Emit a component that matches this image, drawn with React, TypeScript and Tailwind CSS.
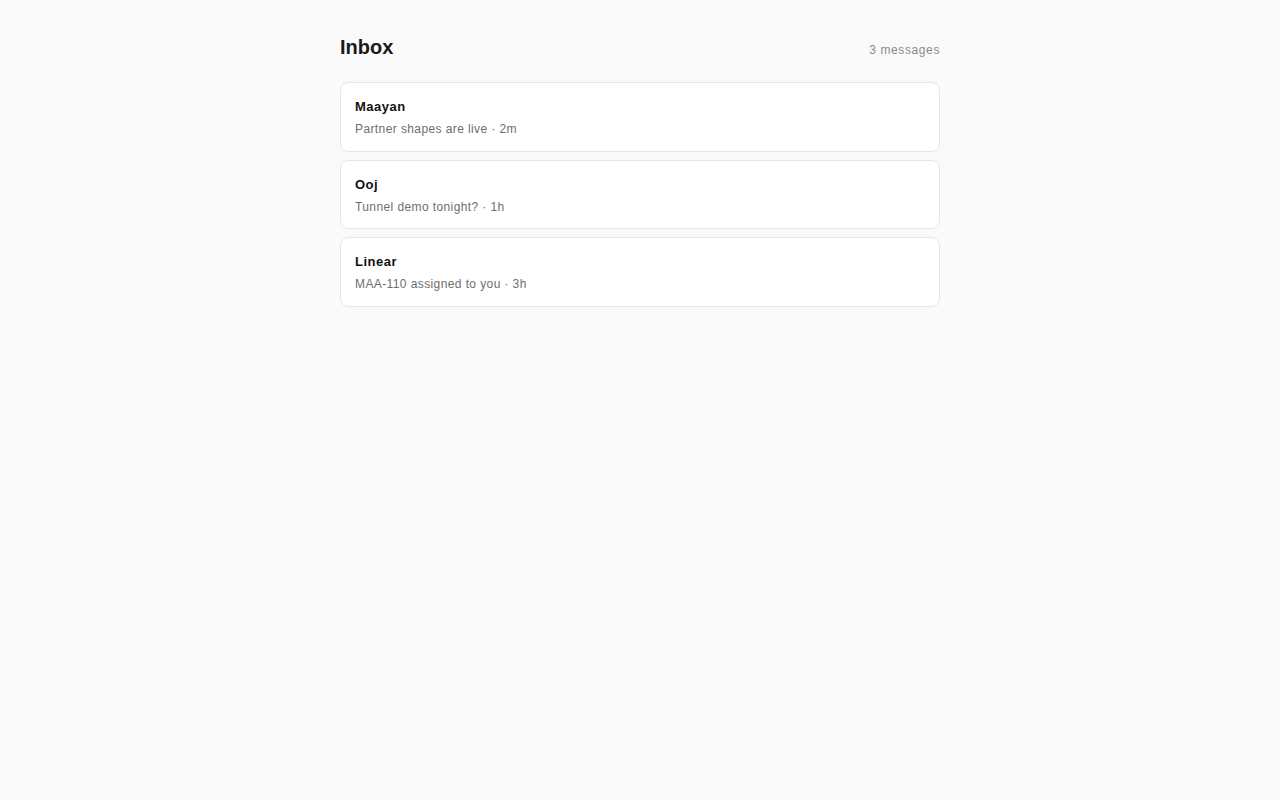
import React from 'react';

type Message = {
    from: string;
    preview: string;
    time: string;
};

const messages: Message[] = [
    { from: 'Maayan', preview: 'Partner shapes are live', time: '2m' },
    { from: 'Ooj', preview: 'Tunnel demo tonight?', time: '1h' },
    { from: 'Linear', preview: 'MAA-110 assigned to you', time: '3h' },
];

export default function App() {
    return (
        <div className="min-h-screen w-full bg-[#fafafa] font-['Liberation_Sans',Arial,sans-serif]">
            <main className="mx-auto w-[600px] pt-[33px]">
                <header className="flex items-center justify-between h-[28px] mb-[21px]">
                    <h1 className="text-[20px] font-bold text-[#1a1a1a] leading-[28px]">Inbox</h1>
                    <span className="text-[12px] tracking-[0.6px] text-[#8a8a8a] mt-[6px]">{messages.length} messages</span>
                </header>

                <ul className="flex flex-col gap-2">
                    {messages.map((m) => (
                        <li
                            key={m.from}
                            className="bg-white border border-[#e6e6e6] rounded-lg px-[14px] pt-[14px] pb-[12.5px]"
                        >
                            <div className="text-[13px] tracking-[0.5px] font-bold text-[#111] leading-[20px]">{m.from}</div>
                            <div className="text-[12px] tracking-[0.4px] text-[#6e6e6e] leading-[18px] mt-[3px]">
                                {m.preview} · {m.time}
                            </div>
                        </li>
                    ))}
                </ul>
            </main>
        </div>
    );
}
